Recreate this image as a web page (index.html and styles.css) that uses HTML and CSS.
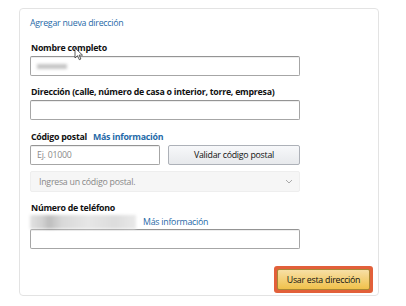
FILE: index.html
```html
<!DOCTYPE html>
<html><head><meta charset="utf-8"/>
<link rel="stylesheet" href="styles.css">
<title>Agregar nueva dirección</title></head>
<body>
<div class="card">
  <a class="add-link" href="#">Agregar nueva dirección</a>

  <div class="label lb1">Nombre completo</div>
  <div class="input"><span class="blur name-blur"></span></div>

  <div class="label lb2">Dirección (calle, número de casa o interior, torre, empresa)</div>
  <div class="input"></div>

  <div class="label lb3">Código postal <a class="info bold" href="#">Más información</a></div>
  <div class="zip-row">
    <div class="input zip">Ej. 01000</div>
    <button class="btn-gray">Validar código postal</button>
  </div>
  <div class="select">
    <span>Ingresa un código postal.</span>
    <svg width="8" height="5" viewBox="0 0 8 5"><path d="M1 1l3 3 3-3" fill="none" stroke="#aaa" stroke-width="1"/></svg>
  </div>

  <div class="label lb4">Número de teléfono</div>
  <div class="phone-row">
    <span class="blur phone-blur"></span>
    <a class="info" href="#">Más información</a>
  </div>
  <div class="input phone"></div>

  <div class="actions">
    <span class="highlight"><button class="btn-yellow">Usar esta dirección</button></span>
  </div>

  <svg class="cursor" width="10" height="14" viewBox="0 0 10 14"><path d="M1 1v10l2.5-2.3 1.8 4 1.6-.7-1.8-3.9H8.5z" fill="#fff" stroke="#333" stroke-width="0.8"/></svg>
</div>
</body></html>
```
FILE: styles.css
```css
*{ padding:0; margin:0; box-sizing:border-box; }
body{ background:#fff; font-family:"Open Sans","Noto Sans",sans-serif; color:#111; letter-spacing:-0.25px; }
.card{ position:relative; margin:8px 0 0 19px; width:360px; height:288px; border:1px solid #e3e3e3; border-radius:4px; padding:8px 0 0 10px; }
.add-link{ display:block; font-size:8.8px; line-height:13px; color:#1f6aa8; text-decoration:none; }
.label{ font-size:8.8px; font-weight:bold; line-height:12px; margin-left:1px; }
.lb1{ margin-top:12px; }
.lb2{ margin-top:10px; }
.lb3{ margin-top:11px; }
.lb4{ margin-top:10px; }
.info{ color:#1f6aa8; text-decoration:none; margin-left:4px; }
.bold{ font-weight:bold; }
.input{ width:270px; height:20px; border:1px solid #a6a6a6; border-top-color:#949494; border-radius:2px; margin-top:2px; box-shadow:0 1px 0 rgba(0,0,0,.07) inset; display:flex; align-items:center; padding-left:6px; font-size:8.8px; color:#8a8a8a; }
.zip-row{ display:flex; gap:8px; margin-top:2px; }
.zip-row .input{ margin-top:0; }
.zip{ width:130px; }
.btn-gray{ width:132px; height:20px; border:1px solid #adb1b8; border-radius:2px; background:linear-gradient(#f7f8fa,#e7e9ec); font-family:inherit; font-size:8.8px; letter-spacing:-0.25px; color:#111; }
.select{ width:270px; height:21px; margin-top:6px; background:#f6f6f6; border:1px solid #eee; border-radius:2px; display:flex; align-items:center; justify-content:space-between; padding:0 6px 0 8px; font-size:8.8px; color:#888; }
.phone-row{ display:flex; align-items:center; height:14px; margin-top:1px; font-size:8.8px; }
.phone-row .info{ margin-left:7px; }
.phone{ margin-top:0; }
.blur{ display:block; filter:blur(1.5px); }
.name-blur{ width:30px; height:5px; background:#c6c6c6; }
.phone-blur{ width:106px; height:14px; background:linear-gradient(90deg,#e2e2e2 0,#d0d0d0 12%,#bdbdbd 18%,#d8d8d8 30%,#e6e6e6 55%,#dcdcdc 80%,#e9e9e9 100%); }
.actions{ display:flex; justify-content:flex-end; margin-top:17px; padding-right:5px; }
.highlight{ display:block; padding:3px; background:#e2603a; border-radius:3px; }
.btn-yellow{ display:block; width:93px; height:21px; border:1px solid #a88734; border-radius:2px; background:linear-gradient(#f7dfa5,#f0c14b); font-family:inherit; font-size:8.8px; letter-spacing:-0.25px; color:#111; }
.cursor{ position:absolute; left:54px; top:38px; }
```
